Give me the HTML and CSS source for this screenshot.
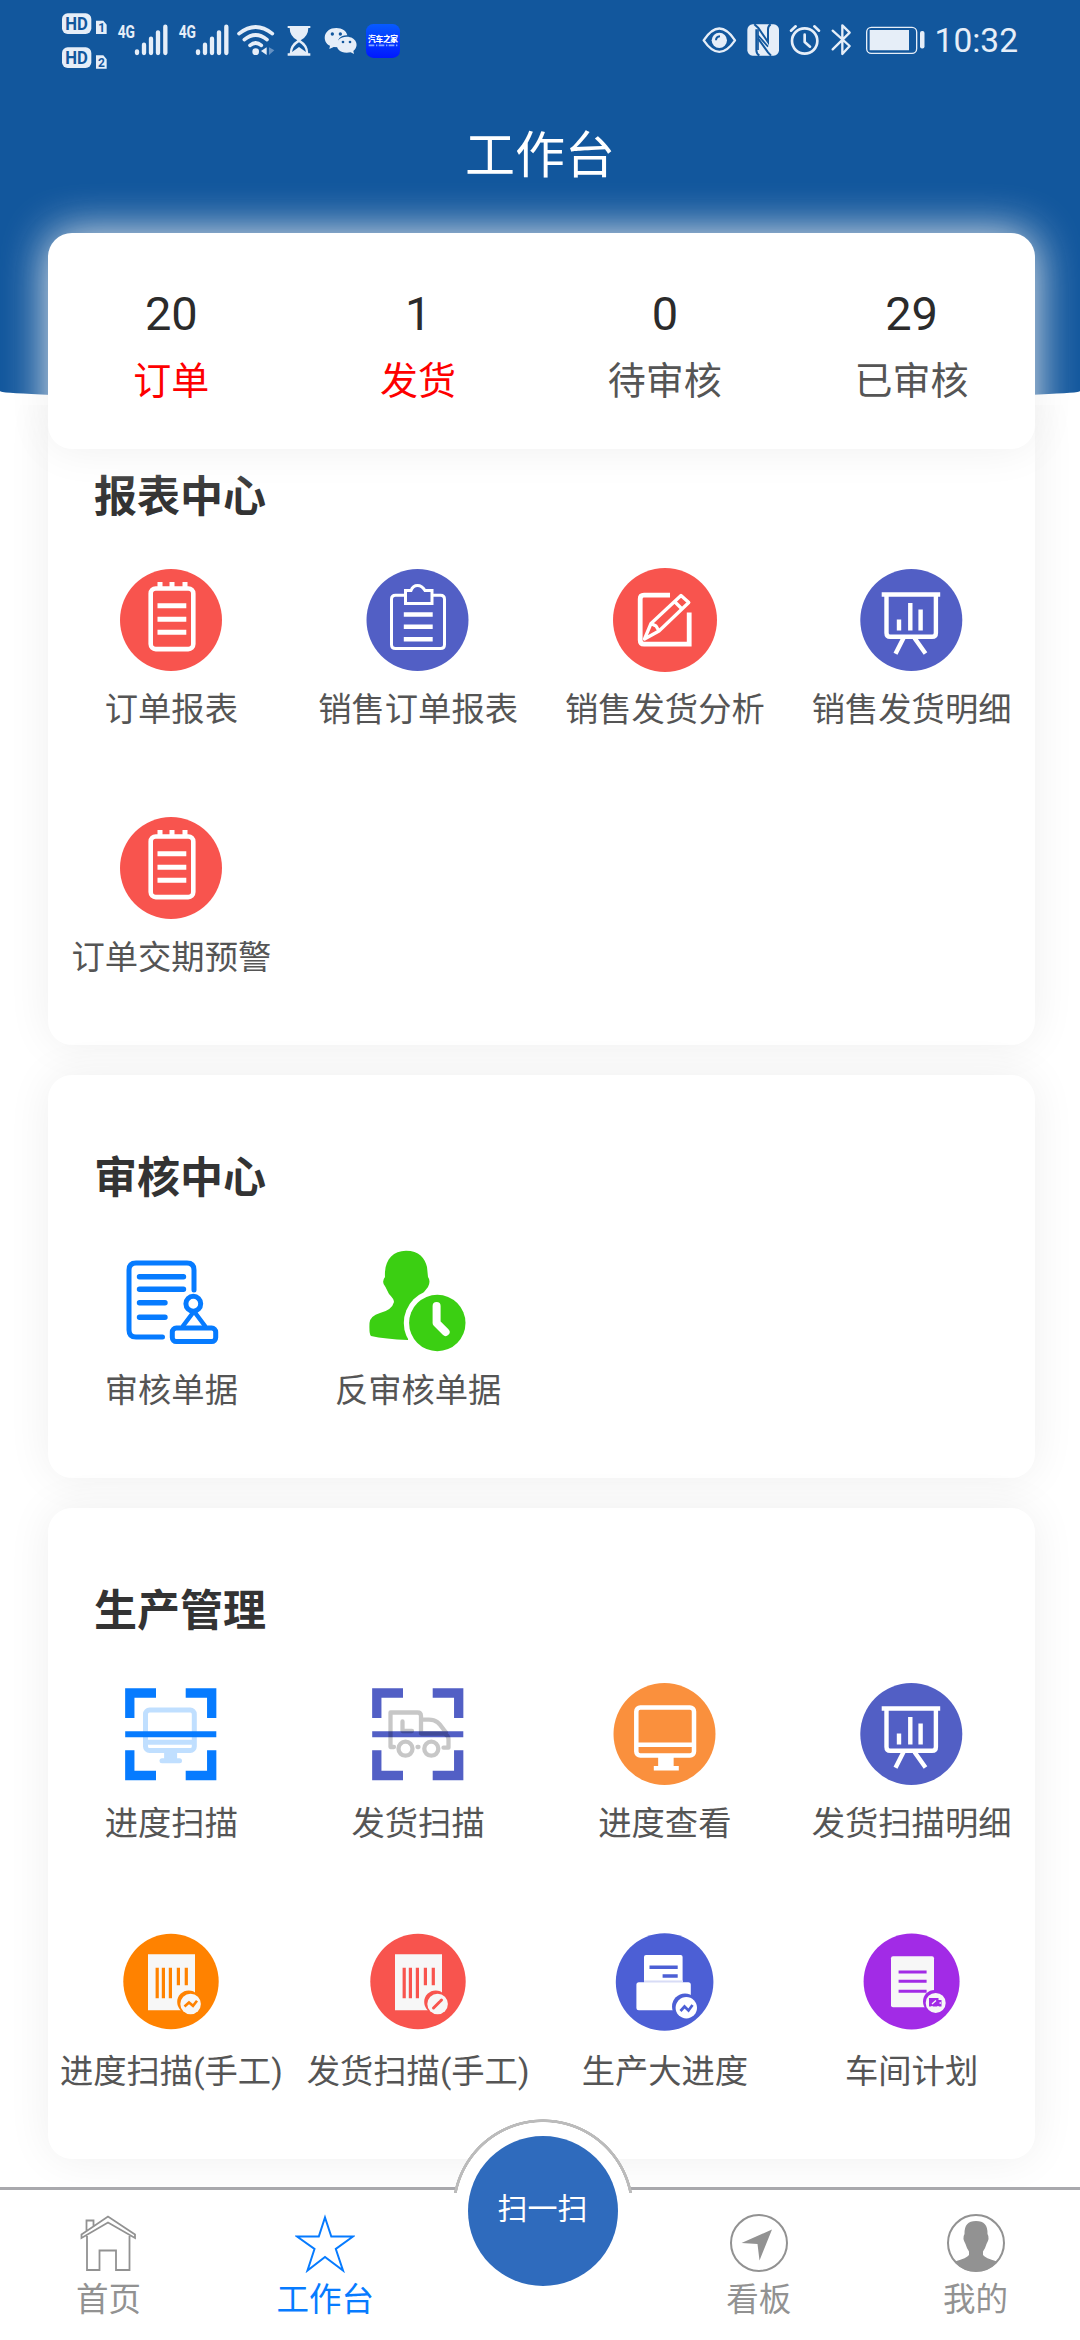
FILE: index.html
```html
<!DOCTYPE html>
<html lang="zh-CN">
<head>
<meta charset="utf-8">
<title>工作台</title>
<link rel="stylesheet" href="styles.css">
</head>
<body>
<svg class="sprite" aria-hidden="true">
  <symbol id="notepad" viewBox="0 0 104 104">
    <circle cx="52" cy="52" r="51" fill="#f8544e"/>
    <g fill="none" stroke="#fff" stroke-width="4.600">
      <rect x="31.700" y="20.500" width="42.600" height="60.600" rx="5"/>
      <path stroke-width="5" d="M41 14v6M53 14v6M66 14v6M38.500 37.700h28.800M38.500 51.300h28.800M38.500 64.200h28.800"/>
    </g>
  </symbol>
  <symbol id="clipboard" viewBox="0 0 104 104">
    <circle cx="51.500" cy="52" r="51" fill="#525fc5"/>
    <g fill="none" stroke="#fff" stroke-width="3">
      <path d="M38.800 27.200H29.500Q25.500 27.200 25.500 31.200V76.500Q25.500 80.500 29.500 80.500H74.500Q78.500 80.500 78.500 76.500V31.200Q78.500 27.200 74.500 27.200H66.700"/>
      <path d="M39.500 22.500H45Q47 17.500 51.500 17.500T59 22.500H66V35.500H39.500Z"/>
      <path stroke-width="4.600" d="M37.800 46.500h28.900M37.800 58.700h28.900M37.800 71.200h28.900"/>
    </g>
  </symbol>
  <symbol id="edit" viewBox="0 0 104 104">
    <circle cx="52" cy="52" r="52" fill="#f8544e"/>
    <g fill="none" stroke="#fff">
      <path stroke-width="4.800" d="M57 27.200H31Q27.200 27.200 27.200 31V72Q27.200 76.200 31 76.200H76.200V44.500"/>
      <path stroke-width="3.300" stroke-linejoin="round" d="M68 27.500L75.800 34.500L46 63L31.500 71L38 55.500ZM61.500 33.500L69 41M38 55.500L43 58L46 63"/>
    </g>
  </symbol>
  <symbol id="board" viewBox="0 0 104 104">
    <circle cx="51.300" cy="52" r="51" fill="#525fc5"/>
    <g fill="none" stroke="#fff" stroke-width="4.400">
      <path d="M21.700 26.500h58.500M26.500 27v38q0 3.800 3.800 3.800h41.800q3.800 0 3.800-3.800v-38M39 51.500v11M50.300 35v27.500M60.600 41.500v21M43.500 70l-8 15.800M54.500 70l11 15.500"/>
    </g>
  </symbol>
  <symbol id="approve" viewBox="0 0 104 104">
    <g fill="none" stroke="#067bff" stroke-width="5" stroke-linecap="round">
      <path d="M75 41V21q0-7-7-7H17q-7 0-7 7V81q0 7 7 7H43.500"/>
      <path stroke-width="5.400" d="M20.500 27.700h44M20.500 40.300h44M20.500 53.700h25.500M20.500 68.300h25.500"/>
      <ellipse cx="74.300" cy="54.700" rx="7.400" ry="7.500"/>
      <path stroke-width="4.500" d="M74.500 63L64 77M75.500 63L86 77"/>
      <rect x="53.300" y="79" width="43.400" height="13.600" rx="4"/>
    </g>
  </symbol>
  <symbol id="userclock" viewBox="0 0 104 104">
    <g transform="translate(1 0)">
    <path fill="#3bcf12" d="M39 1.700C52 1.700 58 9 60 18L61 28Q64 32 61 38L57 43L52 52L41 91Q18 90 4 87Q2 86 2.500 74Q3 67 13 64Q25 61 27 53Q27 50 22 45L18.500 38Q14 33 18 28C17 12 25 1.700 39 1.700Z"/>
    <circle cx="70.300" cy="74" r="33.500" fill="#fff"/>
    <circle cx="70.300" cy="74" r="28.200" fill="#3bcf12"/>
    <path d="M69.600 57v17l9 9" fill="none" stroke="#fff" stroke-width="8" stroke-linecap="round" stroke-linejoin="round"/>
    </g>
  </symbol>
  <symbol id="brackets" viewBox="0 0 104 104">
    <path fill="none" stroke="currentColor" stroke-width="9.300" d="M37 11H10.800V36M66.700 11H92.700V36M37 93.500H10.800V68.300M66.700 93.500H92.700V68.300"/>
    <path fill="currentColor" d="M6.200 49.300h91.100v6H6.200z"/>
  </symbol>
  <symbol id="scanmonitor" viewBox="0 0 104 104">
    <g stroke="#c0dfff" stroke-width="5" fill="none">
      <rect x="26.500" y="28" width="48.800" height="40.500" rx="4"/>
      <path d="M26.500 60.300h49"/><path stroke-width="13" d="M51.600 69v10"/><path stroke-linecap="round" d="M43 78.700h17.500"/>
    </g>
    <use href="#brackets" color="#067bff"/>
  </symbol>
  <symbol id="scantruck" viewBox="0 0 104 104">
    <use href="#brackets" color="#525fc5"/>
    <g fill="none" stroke="#000" stroke-opacity=".22" stroke-width="4.300">
      <path stroke-linecap="round" stroke-linejoin="round" d="M28 65H24.500V30.500H51.500Q55 30.500 55 34V51.500H78Q82.500 53 82.500 57.500V65.700H77.500M57.500 37.700H63C73 37.700 75 45 80 50.500M36.500 39.500V49H46M51.500 65h1"/>
      <circle cx="39.500" cy="66.700" r="7"/><circle cx="65.300" cy="66.700" r="7"/>
    </g>
  </symbol>
  <symbol id="monitor" viewBox="0 0 104 104">
    <circle cx="51.500" cy="52" r="51" fill="#fa903d"/>
    <g fill="none" stroke="#fff" stroke-width="4.500">
      <rect x="23.300" y="25.500" width="57.700" height="48" rx="4"/>
      <path d="M23 62.800h58M40.800 86.200h25"/><path stroke-width="15.500" d="M52.900 74v11"/>
    </g>
  </symbol>
  <symbol id="barcode" viewBox="0 0 104 104">
    <circle cx="52" cy="51.500" r="47.700" fill="currentColor"/>
    <path fill="#f7f7f7" d="M29 24.300h47v56H29z"/>
    <path fill="none" stroke="currentColor" stroke-width="3.200" d="M38.200 37.700v30.600M44.400 37.700v30.600M51.400 37.700v30.600M59.400 37.700v17.500M67.300 37.700v17.500"/>
    <circle cx="69.700" cy="72" r="11.500" fill="currentColor"/><circle cx="71.600" cy="74" r="10.300" fill="#f7f7f7"/>
  </symbol>
  <symbol id="barprogress" viewBox="0 0 104 104">
    <use href="#barcode" color="#ff8200"/>
    <path d="M65.500 76.500l4.500-4 4 3.300 4-5" fill="none" stroke="#ff8200" stroke-width="2.600"/>
  </symbol>
  <symbol id="barship" viewBox="0 0 104 104">
    <use href="#barcode" color="#f8544e"/>
    <path d="M67.500 78l6-6M74.500 71l1-1" fill="none" stroke="#f8544e" stroke-width="3" stroke-linecap="round"/>
  </symbol>
  <symbol id="bigprogress" viewBox="0 0 104 104">
    <circle cx="51.600" cy="52" r="48.800" fill="#4c5fd5"/>
    <rect x="31" y="25" width="38.600" height="30" rx="2" fill="#fff"/>
    <path d="M36.500 37.200h28.200M49.600 46h15.100" stroke="#4c5fd5" stroke-width="3.600"/>
    <rect x="23.400" y="52.300" width="54.400" height="28" rx="2.500" fill="#fff"/><path d="M31 51.500h39" stroke="#d8dcf6" stroke-width="2"/>
    <circle cx="72" cy="76.500" r="13" fill="#4c5fd5"/><circle cx="73.300" cy="77.700" r="10.700" fill="#fff"/>
    <path d="M67.500 81l4-4.500 4 4 4-5.500" fill="none" stroke="#4c5fd5" stroke-width="2.700"/>
  </symbol>
  <symbol id="plan" viewBox="0 0 104 104">
    <circle cx="51.600" cy="51.500" r="48" fill="#a22be6"/>
    <rect x="31" y="26.300" width="43" height="51" rx="2" fill="#f7f7f7"/>
    <path d="M38.600 41.900h28M38.600 51.200h28M38.600 61.200h28" stroke="#a22be6" stroke-width="3"/>
    <circle cx="74.500" cy="71.500" r="11.500" fill="#a22be6"/><circle cx="75.700" cy="72.900" r="10" fill="#f7f7f7"/>
    <path fill="#a22be6" d="M69 68h9.500v2h3v6.500H69z"/><path d="M72 74l4-3.500M79.500 73h1.500M72 77.500v-1.500M78 77.500v-1.500" stroke="#f7f7f7" stroke-width="1.300"/>
  </symbol>
</svg>

<div class="app">
  <header class="hero">
    <div class="status">
      <svg class="status-left" viewBox="0 0 1140 240" aria-label="状态">
        <g fill="#e6eef8">
          <rect x="66" y="40" width="88" height="62" rx="17"/><rect x="66" y="142" width="88" height="62" rx="17"/>
          <path d="M168 62h22l10 12v28h-32zM168 166h22l10 12v28h-32z"/>
          <g class="hd"><text x="76" y="90" textLength="68" lengthAdjust="spacingAndGlyphs">HD</text><text x="76" y="192" textLength="68" lengthAdjust="spacingAndGlyphs">HD</text></g>
          <g class="sim"><text x="175" y="97">1</text><text x="174" y="201">2</text></g>
          <g class="net"><text x="233" y="114" textLength="52" lengthAdjust="spacingAndGlyphs">4G</text><text x="416" y="114" textLength="52" lengthAdjust="spacingAndGlyphs">4G</text></g>
        </g>
        <g stroke="#e6eef8" stroke-width="13" stroke-linecap="round">
          <path d="M291 154v5M312 134v25M333 116v43M354 97v62M376 80v79"/>
          <path d="M474 154v5M495 134v25M516 116v43M537 97v62M559 80v79"/>
        </g>
        <g fill="none" stroke="#e6eef8" stroke-width="11" stroke-linecap="round">
          <path d="M597 101Q647 61 697 101M613 119Q647 91 681 119M630 136Q647 122 664 136"/>
        </g>
        <circle cx="647" cy="155" r="10" fill="#e6eef8"/><path d="M680 142v23l-17-12z" fill="#e6eef8"/><path d="M687 142l16 9-16 14z" fill="#6591c2"/>
        <path fill="#e6eef8" d="M743 78h68v6h-68zM749 83h56q0 25-23 38 23 14 23 40h-56q0-26 23-40-23-13-23-38zM743 160h68v7h-68z"/>
        <path fill="#12579d" d="M777 127q18 11 21 29l-21-15-21 15q3-18 21-29z"/>
        <path fill="#e6eef8" d="M889 84c-40 0-44 43-19 53l-2 10 13-6 14 1c-8-25 8-37 27-36-3-13-15-22-33-22zM920 110c-40 0-40 48 0 48l12-1 10 5-2-9c20-16 8-43-20-43z"/>
        <g fill="#12579d"><circle cx="877" cy="102" r="5"/><circle cx="901" cy="102" r="5"/><circle cx="909" cy="126" r="4"/><circle cx="930" cy="126" r="4"/></g>
        <linearGradient id="appfill" x2="0" y2="1"><stop stop-color="#075bff"/><stop offset="1" stop-color="#0018ff"/></linearGradient>
        <rect x="978" y="72" width="102" height="102" rx="22" fill="url(#appfill)"/>
        <text class="appname" x="984" y="125" textLength="90">汽车之家</text>
        <path d="M986 136h86" stroke="#8aaaff" stroke-width="5" stroke-dasharray="17 5 4 4"/>
      </svg>
      <div class="status-right">
        <svg class="status-icons" viewBox="0 0 720 240">
          <g fill="none" stroke="#e6eef8" stroke-width="7" stroke-linecap="round" stroke-linejoin="round">
            <path d="M74 121Q121 50 168 121Q121 190 74 121Z"/>
            <circle cx="377" cy="123" r="38" stroke-width="8"/><path stroke-width="8" d="M377 104v22l16 14M336 92l14-13M420 92l-14-13"/>
            <path d="M461 92l51 46-22 24V76l22 22-51 50"/>
            <rect x="563" y="82" width="150" height="78" rx="14" stroke-width="4"/>
          </g>
          <circle cx="121" cy="121" r="23" fill="#e6eef8"/><path d="M111 121q0-11 12-12" fill="none" stroke="#12579d" stroke-width="6"/>
          <rect x="205" y="73" width="95" height="94" rx="16" fill="#e6eef8"/>
          <g fill="none" stroke="#12579d" stroke-width="6">
            <path d="M226 73l12 11 29 42V88q0-10 8-15M232 88v62q0 11 9 17M276 167l-9-10-30-42"/>
            <path stroke-width="5" d="M237 88v62M267 140l-30-34"/>
          </g>
          <path d="M572 90h118v61H572z" fill="#e6eef8"/>
        </svg>
        <svg class="battery-cap" viewBox="0 0 6 18"><rect x="1" y="0" width="4.500" height="17.500" rx="2" fill="#e6eef8"/></svg>
        <span class="clock">10:32</span>
      </div>
    </div>
    <h1 class="page-title">工作台</h1>
  </header>

  <section class="summary">
    <div class="stat alert"><b>20</b><span>订单</span></div>
    <div class="stat alert"><b>1</b><span>发货</span></div>
    <div class="stat"><b>0</b><span>待审核</span></div>
    <div class="stat"><b>29</b><span>已审核</span></div>
  </section>

  <main class="content">
    <section class="card first">
      <h2>报表中心</h2>
      <div class="grid">
        <a class="item"><svg><use href="#notepad"/></svg><span>订单报表</span></a>
        <a class="item"><svg><use href="#clipboard"/></svg><span>销售订单报表</span></a>
        <a class="item"><svg><use href="#edit"/></svg><span>销售发货分析</span></a>
        <a class="item"><svg><use href="#board"/></svg><span>销售发货明细</span></a>
        <a class="item"><svg><use href="#notepad"/></svg><span>订单交期预警</span></a>
      </div>
    </section>
    <section class="card">
      <h2>审核中心</h2>
      <div class="grid">
        <a class="item"><svg><use href="#approve"/></svg><span>审核单据</span></a>
        <a class="item"><svg><use href="#userclock"/></svg><span>反审核单据</span></a>
      </div>
    </section>
    <section class="card">
      <h2>生产管理</h2>
      <div class="grid">
        <a class="item"><svg><use href="#scanmonitor"/></svg><span>进度扫描</span></a>
        <a class="item"><svg><use href="#scantruck"/></svg><span>发货扫描</span></a>
        <a class="item"><svg><use href="#monitor"/></svg><span>进度查看</span></a>
        <a class="item"><svg><use href="#board"/></svg><span>发货扫描明细</span></a>
        <a class="item"><svg><use href="#barprogress"/></svg><span>进度扫描(手工)</span></a>
        <a class="item"><svg><use href="#barship"/></svg><span>发货扫描(手工)</span></a>
        <a class="item"><svg><use href="#bigprogress"/></svg><span>生产大进度</span></a>
        <a class="item"><svg><use href="#plan"/></svg><span>车间计划</span></a>
      </div>
    </section>
  </main>

  <nav class="tabbar">
    <a class="tab">
      <svg viewBox="0 0 60 60"><path fill="none" stroke="#929292" stroke-width="1.800" d="M3.500 21.500L30 3.500L57 21.500V25L30 9.500L3.500 25ZM8.500 18V7.500H15.500V13M9 23V57H21.500V37.500H38V57H51.500V23"/></svg>
      <span>首页</span>
    </a>
    <a class="tab active">
      <svg viewBox="0 0 60 60"><path fill="none" stroke="#067bff" stroke-width="2" d="M30 4.500L36.300 23.500H58L40.800 36L48 57.500L30 44L12.500 57.500L19.500 36L2 23.500H23.800Z"/></svg>
      <span>工作台</span>
    </a>
    <a class="tab scan">
      <span class="ring"></span>
      <span class="scan-button">扫一扫</span>
    </a>
    <a class="tab">
      <svg viewBox="0 0 60 60"><circle cx="30" cy="30" r="28" fill="none" stroke="#929292" stroke-width="2"/><path fill="#929292" d="M43 16.500L12.500 30L28.500 31L30.500 47.500Z"/></svg>
      <span>看板</span>
    </a>
    <a class="tab">
      <svg viewBox="0 0 60 60"><circle cx="30" cy="30" r="28" fill="none" stroke="#929292" stroke-width="2"/><path fill="#929292" d="M30 8Q42 8 41.500 21Q44 25 40.500 31Q39 36 37 38.500V42Q39 45 51 48.500Q44 58.500 30 58.500T9 48.500Q21 45 23 42V38.500Q21 36 19.500 31Q16 25 18.500 21Q18 8 30 8Z"/></svg>
      <span>我的</span>
    </a>
  </nav>
</div>
</body>
</html>
```
FILE: styles.css
```css
* { box-sizing: border-box; }

body {
  margin: 0;
  background: #fff;
  color: #333;
  font-family: Roboto, "Noto Sans CJK SC", sans-serif;
}

.sprite { display: none; }

.app {
  width: 1080px;
  height: 2340px;
  display: flex;
  flex-direction: column;
  overflow: hidden;
}

/* header */
.hero {
  flex: none;
  height: 400px;
  background: #12579d;
  border-radius: 0 0 50% 50% / 0 0 9px 9px;
}

.status {
  height: 80px;
  padding: 0 62px 0 40px;
  display: flex;
  justify-content: space-between;
}

.status-left { width: 380px; height: 80px; }
.status-left text { font-weight: 700; }
.hd text { fill: #12579d; font-size: 54px; }
.sim text { fill: #12579d; font-size: 36px; }
.net text { font-size: 54px; }
.status-left .appname { fill: #fff; font-size: 23px; font-weight: 900; }

.status-right { display: flex; align-items: center; height: 80px; }
.status-icons { width: 240px; height: 80px; flex: none; }
.battery-cap { width: 6px; height: 18px; margin-right: 10px; }
.clock { color: #e6eef8; font-size: 33.500px; line-height: 40px; padding-top: 2px; }

.page-title {
  margin: 39px 0 0;
  color: #fff;
  font-size: 50px;
  line-height: 74px;
  font-weight: 400;
  text-align: center;
}

/* summary */
.summary {
  position: relative;
  z-index: 1;
  flex: none;
  height: 216px;
  margin: -167px 45px 0 48px;
  padding-top: 50px;
  display: grid;
  grid-template-columns: repeat(4, 1fr);
  border-radius: 24px;
  background: #fff;
  box-shadow: 0 0 45px #efefef;
}

.stat { display: flex; flex-direction: column; align-items: center; color: #555; }
.stat b { color: #2b2b2b; font-size: 47px; line-height: 62px; font-weight: 400; }
.stat span { margin-top: 9px; font-size: 38px; line-height: 54px; }
.stat.alert { color: #fe0000; }

/* cards */
.content {
  flex: none;
  height: 1782px;
  margin-top: -44px;
  padding: 0 45px 0 48px;
  overflow: hidden;
  display: flex;
  flex-direction: column;
  gap: 30px;
}

.card {
  flex: none;
  padding: 73px 0 63px;
  border-radius: 24px;
  background: #fff;
  box-shadow: 0 0 45px #efefef;
}

.card.first { margin-top: -11px; }

.card h2 {
  margin: 0 0 41px 46px;
  font-size: 43px;
  line-height: 60px;
  font-weight: 700;
}

.grid { display: grid; grid-template-columns: repeat(4, 1fr); row-gap: 82px; }

.item {
  min-width: 0;
  display: flex;
  flex-direction: column;
  align-items: center;
  color: #555;
}

.item svg { width: 104px; height: 104px; }
.item span { margin-top: 14px; font-size: 33.300px; line-height: 48px; white-space: nowrap; }

/* tab bar */
.tabbar {
  position: relative;
  z-index: 2;
  flex: none;
  width: 1084px;
  height: 153px;
  border-top: 3px solid #a9a9ad;
  background: #fff;
  display: grid;
  grid-template-columns: repeat(5, 1fr);
}

.tab {
  padding-top: 23px;
  display: flex;
  flex-direction: column;
  align-items: center;
  color: #929292;
  font-size: 32.500px;
}

.tab svg { width: 60px; height: 60px; }
.tab span { line-height: 48px; margin-top: 3px; }
.tab.active { color: #067bff; }
.tab.scan { position: relative; padding: 0; }

.tab .ring {
  position: absolute;
  left: 20px;
  top: -71px;
  width: 178px;
  height: 74px;
  margin: 0;
  overflow: hidden;
  background: radial-gradient(circle 91px at 50% 91px, #fff 87.500px, #bbb 88px, #bbb 90.500px, transparent 91px);
}

.tab .scan-button {
  position: absolute;
  left: 34px;
  top: -54px;
  width: 150px;
  height: 150px;
  margin: 0;
  border-radius: 50%;
  background: #2f6bbd;
  color: #fff;
  font-size: 30px;
  line-height: 146px;
  text-align: center;
}
```
